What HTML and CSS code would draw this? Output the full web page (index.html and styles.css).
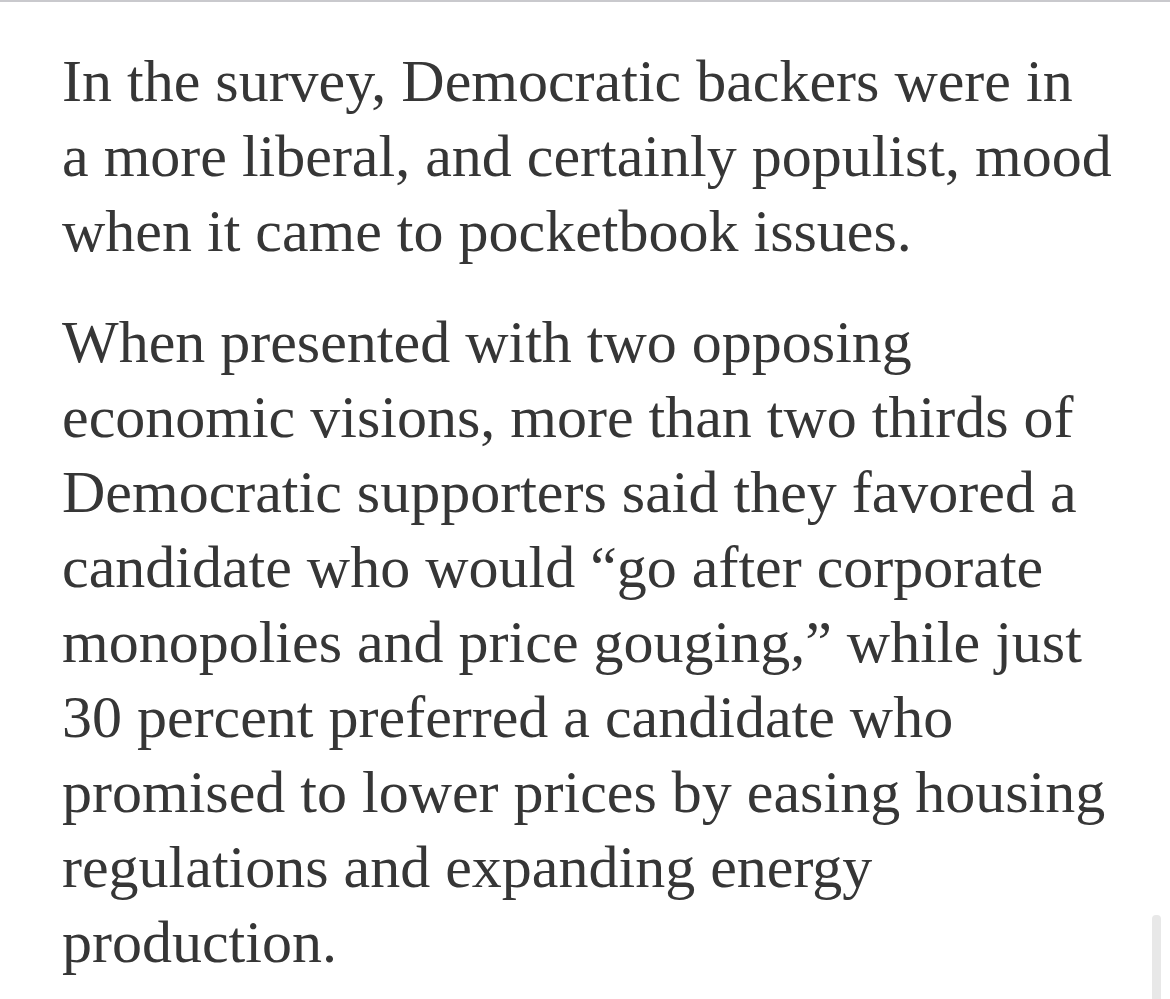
FILE: index.html
```html
<!DOCTYPE html>
<html>
<head>
<meta charset="utf-8">
<link rel="stylesheet" href="styles.css">
</head>
<body>
<div class="page">
  <article class="article">
    <p class="para">In the survey, Democratic backers were in<br>a more liberal, and certainly populist, mood<br>when it came to pocketbook issues.</p>
    <p class="para">When presented with two opposing<br>economic visions, more than two thirds of<br>Democratic supporters said they favored a<br>candidate who would “go after corporate<br>monopolies and price gouging,” while just<br>30 percent preferred a candidate who<br>promised to lower prices by easing housing<br>regulations and expanding energy<br>production.</p>
  </article>
  <div class="scrollbar"></div>
</div>
</body>
</html>
```

FILE: styles.css
```css
html, body {
  margin: 0;
  padding: 0;
  background: #ffffff;
}
.page {
  position: relative;
  width: 1170px;
  height: 999px;
  overflow: hidden;
  border-top: 2px solid #c9c9cd;
  box-sizing: border-box;
}
.article {
  padding: 42px 0 0 62px;
}
.para {
  margin: 0 0 36px 0;
  font-family: "Liberation Serif", serif;
  font-size: 60px;
  line-height: 75px;
  color: #363636;
  white-space: nowrap;
}
.scrollbar {
  position: absolute;
  left: 1152px;
  top: 913px;
  width: 9px;
  height: 90px;
  background: #e8e8e8;
  border-radius: 4px 4px 0 0;
}
```
